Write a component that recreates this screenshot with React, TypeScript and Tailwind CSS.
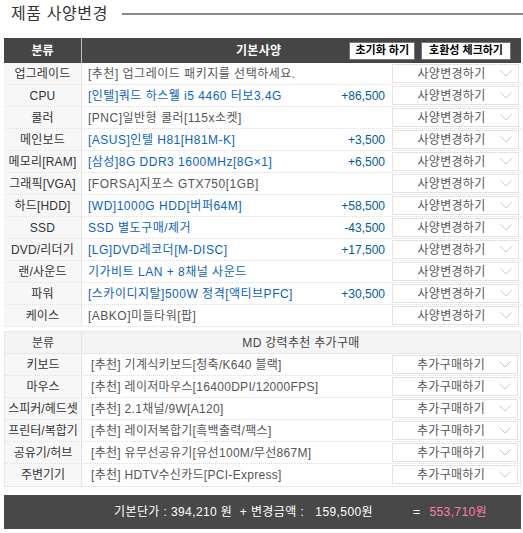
import React from 'react';

const specRows = [
  { cat: '업그레이드', name: '[추천] 업그레이드 패키지를 선택하세요.', link: false, price: '' },
  { cat: 'CPU', name: '[인텔]쿼드 하스웰 i5 4460 터보3.4G', link: true, price: '+86,500' },
  { cat: '쿨러', name: '[PNC]일반형 쿨러[115x소켓]', link: false, price: '' },
  { cat: '메인보드', name: '[ASUS]인텔 H81[H81M-K]', link: true, price: '+3,500' },
  { cat: '메모리[RAM]', name: '[삼성]8G DDR3 1600MHz[8G×1]', link: true, price: '+6,500' },
  { cat: '그래픽[VGA]', name: '[FORSA]지포스 GTX750[1GB]', link: false, price: '' },
  { cat: '하드[HDD]', name: '[WD]1000G HDD[버퍼64M]', link: true, price: '+58,500' },
  { cat: 'SSD', name: 'SSD 별도구매/제거', link: true, price: '-43,500' },
  { cat: 'DVD/리더기', name: '[LG]DVD레코더[M-DISC]', link: true, price: '+17,500' },
  { cat: '랜/사운드', name: '기가비트 LAN + 8채널 사운드', link: true, price: '' },
  { cat: '파워', name: '[스카이디지탈]500W 정격[액티브PFC]', link: true, price: '+30,500' },
  { cat: '케이스', name: '[ABKO]미들타워[팝]', link: false, price: '' },
];

const extraRows = [
  { cat: '키보드', name: '[추천] 기계식키보드[청축/K640 블랙]' },
  { cat: '마우스', name: '[추천] 레이저마우스[16400DPI/12000FPS]' },
  { cat: '스피커/헤드셋', name: '[추천] 2.1채널/9W[A120]' },
  { cat: '프린터/복합기', name: '[추천] 레이저복합기[흑백출력/팩스]' },
  { cat: '공유기/허브', name: '[추천] 유무선공유기[유선100M/무선867M]' },
  { cat: '주변기기', name: '[추천] HDTV수신카드[PCI-Express]' },
];

const SelectBox = ({ label }: { label: string }) => (
  <div className="mx-[2px] mt-[1px] h-[19px] border border-[#e3e3e3] bg-white flex items-center">
    <span className="flex-1 text-center pl-[10px] text-[#555] tracking-[0.3px]">{label}</span>
    <svg width="12" height="7" viewBox="0 0 12 7" className="mr-[6px]">
      <polyline points="0.5,0.5 6,6 11.5,0.5" fill="none" stroke="#c8c8c8" strokeWidth="1" />
    </svg>
  </div>
);

export default function App() {
  return (
    <div
      className="w-[523px] h-[533px] bg-white text-[12px] text-[#333] overflow-hidden"
      style={{ fontFamily: '"Liberation Sans", "Noto Sans CJK KR", sans-serif' }}
    >
      {/* title */}
      <div className="flex items-center h-[27px] pl-[11px]">
        <span className="text-[16px] leading-none text-[#333] tracking-[0.6px]">제품 사양변경</span>
        <div className="flex-1 h-[2px] bg-[#888] ml-[14px]" />
      </div>

      {/* spec table */}
      <div className="ml-[4px] mr-[2px] mt-[11px]">
        <div className="flex items-center h-[25px] bg-[#454545] text-white font-bold">
          <div className="w-[78px] h-full flex items-center justify-center border-r border-[#bbb]">분류</div>
          <div className="pl-[154px] tracking-[0.3px]">기본사양</div>
          <div className="ml-auto mr-[10px] flex gap-[6px] text-[11px] text-black">
            <div className="h-[18px] px-[5px] bg-white border border-[#777] flex items-center">초기화 하기</div>
            <div className="h-[18px] px-[7px] bg-white border border-[#777] flex items-center">호환성 체크하기</div>
          </div>
        </div>
        {specRows.map((r) => (
          <div key={r.cat} className="grid grid-cols-[78px_1fr_131px] h-[22px] border-b border-dotted border-[#ddd]">
            <div className="bg-[#f7f7f7] border-r border-[#e6e6e6] flex items-center justify-center text-[#333] whitespace-nowrap tracking-[0.2px]">
              {r.cat}
            </div>
            <div className="flex items-center pl-[6px] pr-[5px] whitespace-nowrap">
              <span className={`tracking-[0.5px] ${r.link ? 'text-[#0b62c4]' : 'text-[#555]'}`}>{r.name}</span>
              <span className="ml-auto text-[#005a9e]">{r.price}</span>
            </div>
            <SelectBox label="사양변경하기" />
          </div>
        ))}
      </div>

      {/* extra purchase table */}
      <div className="ml-[4px] mr-[2px] mt-[4px] border border-[#e8e8e8]">
        <div className="grid grid-cols-[77px_1fr] h-[22px] bg-[#f4f4f4] border-b border-[#e8e8e8] text-[#444]">
          <div className="flex items-center justify-center border-r border-[#e6e6e6]">분류</div>
          <div className="flex items-center justify-center tracking-[0.3px]">MD 강력추천 추가구매</div>
        </div>
        {extraRows.map((r, i) => (
          <div
            key={r.cat}
            className={`grid grid-cols-[77px_1fr_130px] h-[22px] ${i < extraRows.length - 1 ? 'border-b border-dotted border-[#ddd]' : ''}`}
          >
            <div className="bg-[#f7f7f7] border-r border-[#e6e6e6] flex items-center justify-center text-[#333] whitespace-nowrap">
              {r.cat}
            </div>
            <div className="flex items-center pl-[9px] whitespace-nowrap text-[#555] tracking-[0.3px]">{r.name}</div>
            <SelectBox label="추가구매하기" />
          </div>
        ))}
      </div>

      {/* total bar */}
      <div className="ml-[4px] mr-[2px] mt-[8px] h-[34px] bg-[#484848] flex items-center pl-[110px] text-white whitespace-nowrap tracking-[0.4px]">
        <span>기본단가 : 394,210 원 &nbsp;+ 변경금액 : &nbsp;&nbsp;159,500원</span>
        <span className="ml-[40px]">=</span>
        <span className="ml-[9px] text-[#ff7ea5]">553,710원</span>
      </div>
    </div>
  );
}
